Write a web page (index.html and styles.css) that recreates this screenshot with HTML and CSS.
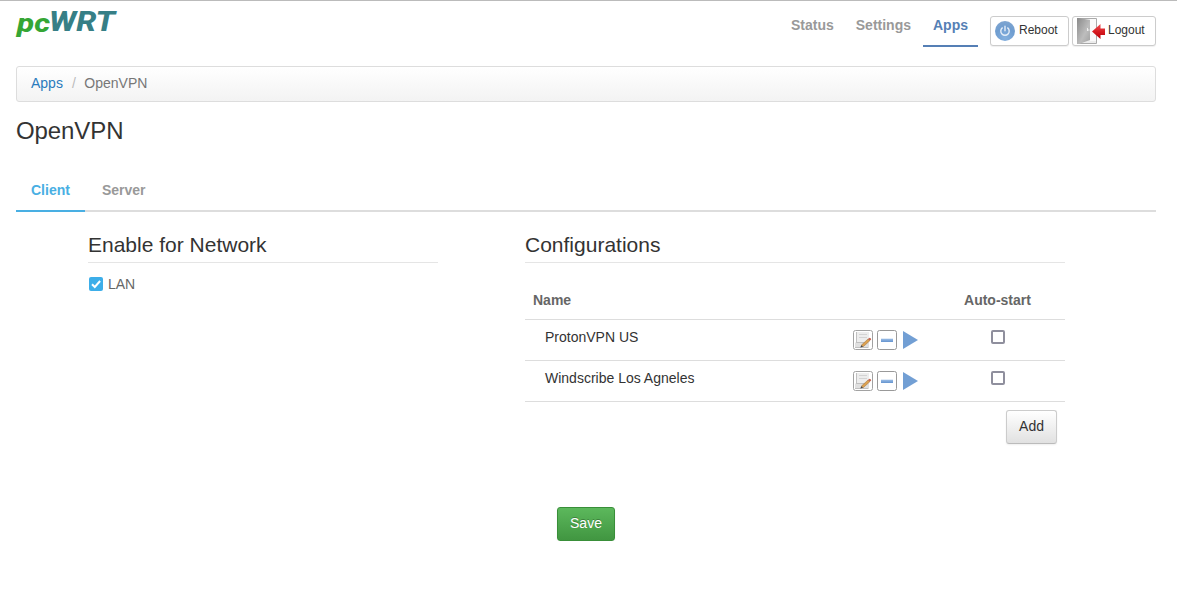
FILE: index.html
```html
<!DOCTYPE html>
<html lang="en">
<head>
<meta charset="utf-8">
<title>pcWRT - OpenVPN</title>
<link rel="stylesheet" href="styles.css">
</head>
<body>
<svg class="defs" width="0" height="0" aria-hidden="true">
  <defs>
    <radialGradient id="orb" cx=".5" cy=".85" r=".85"><stop offset="0" stop-color="#84b0df"/><stop offset=".6" stop-color="#6f9dd0"/><stop offset="1" stop-color="#7fa5d0"/></radialGradient>
    <linearGradient id="door" x1="0" y1="0" x2="1" y2="1"><stop offset="0" stop-color="#8a8a8a"/><stop offset=".6" stop-color="#bdbdbd"/><stop offset="1" stop-color="#a0a0a0"/></linearGradient>
    <linearGradient id="arrow" x1="0" y1="0" x2="0" y2="1"><stop offset="0" stop-color="#ef5054"/><stop offset=".5" stop-color="#d81c22"/><stop offset="1" stop-color="#b80008"/></linearGradient>
    <linearGradient id="bar" x1="0" y1="0" x2="0" y2="1"><stop offset="0" stop-color="#9abde6"/><stop offset="1" stop-color="#6594cf"/></linearGradient>
    <symbol id="edit" viewBox="0 0 20 20">
      <rect x=".5" y=".5" width="19" height="19" rx="2" fill="#fff" stroke="#a2a2a2"/>
      <path d="M3 2h13v11H3z" fill="#ededed"/>
      <path d="M2 12.500h14V18H2z" fill="#e0e0e0"/>
      <path d="M6 4.500h8M6 7.500h8" stroke="#d3d3d3"/>
      <path d="M3 12.500h9M2 17.500h13M3.500 2v10" stroke="#c0c0c0"/>
      <path d="M8.300 15.200l6.700-6.200 1.800 1.800-6.700 6z" fill="#dca150" stroke="#9a6c35" stroke-width=".5"/>
      <path d="M15 9l1.300-1.200q1.800.3 1.900 1.800L16.800 10.800z" fill="#c56552"/>
      <path d="M7.300 17.500l1-2.300 1.800 1.600z" fill="#444"/>
    </symbol>
    <symbol id="remove" viewBox="0 0 20 20">
      <rect x=".5" y=".5" width="19" height="19" rx="2" fill="#fff" stroke="#999"/>
      <rect x="4" y="8.700" width="12" height="3.300" fill="url(#bar)"/>
    </symbol>
    <symbol id="play" viewBox="0 0 16 20"><path d="M0 1l15 9-15 9z" fill="#729fd4"/></symbol>
  </defs>
</svg>
<div class="page">
  <header class="header">
    <svg class="logo" width="102" height="32" role="img" aria-label="pcWRT">
      <text class="logo-pc" x="1" y="25.500" textLength="33" lengthAdjust="spacingAndGlyphs">pc</text>
      <text class="logo-wrt" x="33" y="25" textLength="66" lengthAdjust="spacingAndGlyphs">WRT</text>
    </svg>
    <nav class="nav">
      <a class="nav-link">Status</a>
      <a class="nav-link">Settings</a>
      <a class="nav-link active">Apps</a>
    </nav>
    <div class="actions">
      <button class="tool reboot">
        <svg width="20" height="20" viewBox="0 0 20 20"><circle cx="10" cy="10" r="10" fill="url(#orb)"/><path d="M7.300 6.900a4.200 4.200 0 1 0 5.400 0M10 5.200v4.600" fill="none" stroke="#e6eef8" stroke-width="1.400" stroke-linecap="round"/></svg>
        <span>Reboot</span>
      </button>
      <button class="tool logout">
        <svg width="28" height="26" viewBox="0 0 28 26"><path d="M.5.500h19v25H.5z" fill="#ececec" stroke="#aaa"/><path d="M13 1h6v22h-6z" fill="#fafafa"/><path d="M0 0h2l11 2v20L2 26H0z" fill="url(#door)"/><path d="M10 12h2.500M10.500 10v3" stroke="#eee"/><path d="M15 13.500l8.500-7.500v4.500h4.500v6.500h-4.500v4z" fill="url(#arrow)"/></svg>
        <span>Logout</span>
      </button>
    </div>
  </header>
  <div class="breadcrumb"><a>Apps</a><i>/</i><span>OpenVPN</span></div>
  <h1>OpenVPN</h1>
  <div class="tabs"><a class="tab selected">Client</a><a class="tab">Server</a></div>
  <main class="columns">
    <section>
      <h2>Enable for Network</h2>
      <label class="network">
        <svg width="14" height="14" viewBox="0 0 14 14"><rect width="14" height="14" rx="2" fill="#3daee9"/><path d="M3 7.200l2.800 2.800 5.300-6" fill="none" stroke="#fff" stroke-width="2"/></svg>
        LAN
      </label>
    </section>
    <section>
      <h2>Configurations</h2>
      <div class="row head"><b>Name</b><span></span><b class="center">Auto-start</b></div>
      <div class="row">
        <span class="name">ProtonVPN US</span>
        <span class="icons"><svg width="20" height="20"><use href="#edit"/></svg><svg width="20" height="20"><use href="#remove"/></svg><svg width="16" height="20"><use href="#play"/></svg></span>
        <span class="box"></span>
      </div>
      <div class="row">
        <span class="name">Windscribe Los Agneles</span>
        <span class="icons"><svg width="20" height="20"><use href="#edit"/></svg><svg width="20" height="20"><use href="#remove"/></svg><svg width="16" height="20"><use href="#play"/></svg></span>
        <span class="box"></span>
      </div>
      <div class="add-row"><button class="btn">Add</button></div>
    </section>
  </main>
  <div class="save-row"><button class="btn save">Save</button></div>
</div>
</body>
</html>
```
FILE: styles.css
```css
* { box-sizing: border-box; }
body { margin: 0; background: #fff; border-top: 1px solid #bbb; color: #333; font: 14px/20px "Liberation Sans", Arial, sans-serif; }
button { font: inherit; color: #333; }
svg { display: block; flex: none; }
.defs { position: absolute; }
.page { width: 1140px; margin-left: 16px; }
.header { display: flex; height: 65px; padding-top: 5px; }
.logo { overflow: visible; }
.logo-pc { font: italic 800 26px Roboto, sans-serif; fill: #35a635; }
.logo-wrt { font: italic 800 28px Roboto, sans-serif; fill: #367f86; }
.nav { display: flex; gap: 2px; margin-left: auto; margin-right: 12px; }
.nav-link { height: 41px; padding: 9px 10px 0; font-weight: bold; color: #999; border-bottom: 2px solid transparent; }
.nav-link.active { color: #557fb5; border-color: #557fb5; }
.actions { display: flex; gap: 3px; padding-top: 10px; }
.tool { display: flex; align-items: center; height: 30px; padding: 0; border: 1px solid #ccc; border-radius: 3px; background: #fff; box-shadow: 0 1px 1px #0001; font-size: 12px; }
.tool span { margin-top: -2px; }
.reboot { width: 79px; padding-left: 4px; gap: 4px; }
.logout { width: 84px; padding-left: 4px; gap: 3px; }
.breadcrumb { display: flex; height: 36px; padding: 6px 14px; border: 1px solid #ddd; border-radius: 3px; background: linear-gradient(#fff, #f3f3f3); color: #777; }
.breadcrumb a { color: #2a7bbd; }
.breadcrumb i { margin: 0 8.5px 0 9px; color: #bbb; font-style: normal; }
h1 { margin: 14px 0 0; font-weight: normal; font-size: 24px; line-height: 30px; letter-spacing: -0.1px; }
.tabs { display: flex; height: 42px; margin-top: 24px; border-bottom: 2px solid #ddd; }
.tab { height: 42px; padding: 10px 15px 0; margin-right: 2px; font-weight: bold; color: #999; }
.tab.selected { color: #49afe3; border-bottom: 2px solid #49afe3; }
.columns { display: grid; grid-template-columns: 350px 540px; gap: 87px; margin: 18px 0 0 72px; }
h2 { height: 33px; margin: 0; padding-top: 2px; border-bottom: 1px solid #e5e5e5; font-weight: normal; font-size: 21px; line-height: 25px; }
.network { display: flex; align-items: center; gap: 5.5px; height: 20px; margin-top: 11px; color: #666; }
.network svg { margin-left: 0.5px; }
.row { display: grid; grid-template-columns: 328px 78px 134px; height: 41px; padding-top: 7px; border-bottom: 1px solid #ddd; }
.head { height: 36px; margin-top: 21px; padding-top: 6px; color: #666; }
.head b:first-child { padding-left: 8px; }
.center { text-align: center; padding-right: 1px; }
.name { padding-left: 20px; }
.icons { display: flex; gap: 4px; padding-top: 3px; }
.icons svg:last-child { margin-left: 2px; }
.box { width: 14px; height: 14px; margin: 3px auto 0; border: 2px solid #8f8f9d; border-radius: 2px; background: #fff; }
.add-row { display: flex; justify-content: flex-end; padding: 8px 8px 0 0; }
.btn { height: 34px; padding: 0 12px 2px; border: 1px solid #ccc; border-bottom-color: #bbb; border-radius: 3px; background: linear-gradient(#fff, #e1e1e1); box-shadow: 0 1px 2px #0001; }
.save-row { display: flex; justify-content: center; margin-top: 63px; }
.save { width: 58px; border-color: #398f39; background: linear-gradient(#5cb85c, #419641); color: #fff; text-shadow: 0 -1px 0 #0004; }
```
